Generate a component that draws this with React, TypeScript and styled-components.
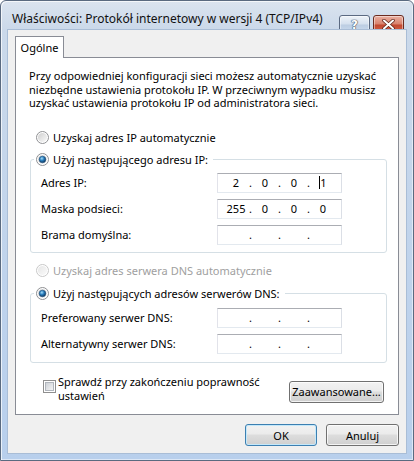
import React, { useId } from "react";
import styled, { createGlobalStyle } from "styled-components";

const GlobalStyle = createGlobalStyle`
  html, body { margin: 0; padding: 0; background: #fff; }
  body {
    font-family: "Noto Sans", "Segoe UI", sans-serif;
    font-size: 11px;
    color: #000;
  }
  * { box-sizing: border-box; }
`;

const Window = styled.div`
  width: 414px;
  height: 461px;
  display: flex;
  flex-direction: column;
  border: 1px solid #5a6a80;
  border-radius: 6px 6px 0 0;
  padding: 0 7px 7px;
  background: linear-gradient(#dbe4ef, #cbd9ea 28px, #bfd3ec 60%, #b8cfec);
  box-shadow: inset 1px 1px 0 rgba(255, 255, 255, 0.7), inset -1px -1px 0 rgba(255, 255, 255, 0.5);
`;

const TitleBar = styled.div`
  height: 29px;
  display: flex;
  align-items: center;
  padding: 6px 2px 0 4px;
`;

const Title = styled.div`
  font-size: 12px;
  color: #111;
  white-space: nowrap;
`;

const CaptionButtons = styled.div`
  margin-left: auto;
  display: flex;
  gap: 3px;
  align-self: flex-start;
  margin-top: 8px;
`;

const CaptionButton = styled.div<{ $close?: boolean }>`
  width: 31px;
  height: 19px;
  border-radius: 3px;
  display: flex;
  align-items: center;
  justify-content: center;
  border: 1px solid ${(p) => (p.$close ? "#6b2b20" : "#5b6a82")};
  background: ${(p) =>
    p.$close
      ? "linear-gradient(#eab0a2, #d8816d 48%, #c2472f 52%, #d2664c)"
      : "linear-gradient(#eef3f9, #d4e0ee 48%, #bccde2 52%, #cadcf0)"};
  box-shadow: inset 0 0 0 1px rgba(255, 255, 255, 0.45);
`;

const HelpGlyph = styled.span`
  font-family: "DejaVu Sans", sans-serif;
  font-weight: bold;
  font-size: 12px;
  color: #fff;
  line-height: 1;
  text-shadow: 0 0 1px #3d4a5e, 0 0 1px #3d4a5e, 0 0 1px #3d4a5e;
`;

const Client = styled.div`
  flex: 1;
  background: #f0f0f0;
  display: flex;
  flex-direction: column;
  padding: 6px 7px 0 7px;
  box-shadow: 0 0 0 1px #a9bdd6;
`;

const TabStrip = styled.div`
  display: flex;
`;

const Tab = styled.div`
  width: 49px;
  height: 22px;
  margin-bottom: -1px;
  border: 1px solid #898c95;
  border-bottom: none;
  background: #fff;
  display: flex;
  align-items: center;
  justify-content: center;
  position: relative;
  z-index: 1;
`;

const Panel = styled.div`
  height: 358px;
  border: 1px solid #898c95;
  background: #fff;
  display: flex;
  flex-direction: column;
`;

const Description = styled.p`
  margin: 11px 0 0 13px;
  line-height: 13.5px;
  white-space: nowrap;
`;

const RadioRow = styled.label<{ $top: number; $disabled?: boolean }>`
  display: flex;
  align-items: center;
  gap: 4px;
  height: 14px;
  margin: ${(p) => p.$top}px 0 0 20px;
  color: ${(p) => (p.$disabled ? "#a0a0a0" : "#000")};
`;

const Group = styled.fieldset<{ $top: number }>`
  margin: ${(p) => p.$top}px 11px 0 14px;
  padding: 0;
  min-width: 0;
  border: 1px solid #d5dfe5;
  border-radius: 3px;
`;

const Legend = styled.legend`
  margin-left: 3px;
  padding: 0 5px 0 2px;
  display: flex;
  align-items: center;
  gap: 4px;
  height: 14px;
`;

const Rows = styled.div<{ $pt: number; $pb: number }>`
  display: flex;
  flex-direction: column;
  gap: 6px;
  padding: ${(p) => p.$pt}px 44px ${(p) => p.$pb}px 10px;
`;

const Row = styled.div`
  display: flex;
  align-items: center;
  height: 20px;
`;

const Label = styled.span`
  flex: 1;
`;

const IpField = styled.div`
  width: 125px;
  height: 20px;
  display: flex;
  align-items: center;
  padding: 0 6px;
  border: 1px solid;
  border-color: #abadb3 #dbdfe6 #e3e9ef #e2e3ea;
  background: #fff;
`;

const Octet = styled.span`
  width: 24px;
  display: flex;
  justify-content: center;
  align-items: center;
`;

const Dot = styled.span`
  width: 5px;
  text-align: center;
`;

const Caret = styled.span`
  display: inline-block;
  width: 1px;
  height: 13px;
  background: #000;
`;

const Footer = styled.div`
  display: flex;
  align-items: flex-start;
  margin: 12px 14px 0 27px;
`;

const CheckLabel = styled.label`
  display: flex;
  align-items: flex-start;
  gap: 2px;
  line-height: 14px;
  flex: 1;
`;

const Button = styled.button<{ $w: number; $default?: boolean }>`
  width: ${(p) => p.$w}px;
  height: 22px;
  padding: 0;
  font: inherit;
  color: #000;
  border-radius: 3px;
  border: 1px solid ${(p) => (p.$default ? "#3c7fb1" : "#707070")};
  background: linear-gradient(#f2f2f2, #ebebeb 45%, #dddddd 50%, #cfcfcf);
  box-shadow: inset 0 0 0 1px ${(p) => (p.$default ? "#c4e8fa" : "rgba(255,255,255,0.75)")};
`;

const AdvancedButton = styled(Button)`
  margin-top: 6px;
`;

const DialogButtons = styled.div`
  display: flex;
  justify-content: flex-end;
  gap: 9px;
  margin-top: 9px;
`;

function Radio({ checked, disabled }: { checked?: boolean; disabled?: boolean }) {
  const id = useId().replace(/:/g, "");
  return (
    <svg width="13" height="13" viewBox="0 0 13 13">
      <defs>
        <linearGradient id={`f${id}`} x1="0" y1="0" x2="1" y2="1">
          <stop offset="0" stopColor={disabled ? "#e6e6e6" : "#cfcfcf"} />
          <stop offset="1" stopColor="#fafafa" />
        </linearGradient>
        <radialGradient id={`d${id}`} cx="0.4" cy="0.35" r="0.7">
          <stop offset="0" stopColor="#a6ddf8" />
          <stop offset="0.45" stopColor="#2a7fbf" />
          <stop offset="1" stopColor="#0b2b4d" />
        </radialGradient>
      </defs>
      <circle cx="6.5" cy="6.5" r="6" fill="#fff" stroke={disabled ? "#c8c8c8" : "#8f9093"} />
      <circle cx="6.5" cy="6.5" r="4.6" fill={`url(#f${id})`} />
      {checked && <circle cx="6.5" cy="6.5" r="3.3" fill={`url(#d${id})`} stroke="#1d4f7c" strokeWidth="0.6" />}
    </svg>
  );
}

function Checkbox() {
  const id = useId().replace(/:/g, "");
  return (
    <svg width="13" height="13" viewBox="0 0 13 13" style={{ flex: "none", marginTop: 5 }}>
      <defs>
        <linearGradient id={`c${id}`} x1="0" y1="0" x2="1" y2="1">
          <stop offset="0" stopColor="#cbcfd5" />
          <stop offset="1" stopColor="#f6f6f6" />
        </linearGradient>
      </defs>
      <rect x="0.5" y="0.5" width="12" height="12" fill="#fff" stroke="#8f8f8f" />
      <rect x="2.5" y="2.5" width="8" height="8" fill={`url(#c${id})`} stroke="#b0b5bc" />
    </svg>
  );
}

function CloseGlyph() {
  return (
    <svg width="13" height="11" viewBox="0 0 13 11">
      <path d="M2 1.5 L11 9.5 M11 1.5 L2 9.5" stroke="#5a1e14" strokeWidth="3.4" strokeLinecap="round" />
      <path d="M2 1.5 L11 9.5 M11 1.5 L2 9.5" stroke="#fff" strokeWidth="2" strokeLinecap="round" />
    </svg>
  );
}

function IpAddress({ value, caretLast }: { value?: string[]; caretLast?: boolean }) {
  const parts = value ?? ["", "", "", ""];
  return (
    <IpField>
      {parts.map((part, i) => (
        <React.Fragment key={i}>
          {i > 0 && <Dot>.</Dot>}
          <Octet>
            {caretLast && i === 3 && <Caret />}
            {part}
          </Octet>
        </React.Fragment>
      ))}
    </IpField>
  );
}

export default function App() {
  return (
    <>
      <GlobalStyle />
      <Window>
        <TitleBar>
          <Title>Właściwości: Protokół internetowy w wersji 4 (TCP/IPv4)</Title>
          <CaptionButtons>
            <CaptionButton>
              <HelpGlyph>?</HelpGlyph>
            </CaptionButton>
            <CaptionButton $close>
              <CloseGlyph />
            </CaptionButton>
          </CaptionButtons>
        </TitleBar>
        <Client>
          <TabStrip>
            <Tab>Ogólne</Tab>
          </TabStrip>
          <Panel>
            <Description>
              Przy odpowiedniej konfiguracji sieci możesz automatycznie uzyskać
              <br />
              niezbędne ustawienia protokołu IP. W przeciwnym wypadku musisz
              <br />
              uzyskać ustawienia protokołu IP od administratora sieci.
            </Description>
            <RadioRow $top={21}>
              <Radio />
              Uzyskaj adres IP automatycznie
            </RadioRow>
            <Group $top={8}>
              <Legend>
                <Radio checked />
                Użyj następującego adresu IP:
              </Legend>
              <Rows $pt={6} $pb={7}>
                <Row>
                  <Label>Adres IP:</Label>
                  <IpAddress value={["2", "0", "0", "1"]} caretLast />
                </Row>
                <Row>
                  <Label>Maska podsieci:</Label>
                  <IpAddress value={["255", "0", "0", "0"]} />
                </Row>
                <Row>
                  <Label>Brama domyślna:</Label>
                  <IpAddress />
                </Row>
              </Rows>
            </Group>
            <RadioRow $top={11} $disabled>
              <Radio disabled />
              Uzyskaj adres serwera DNS automatycznie
            </RadioRow>
            <Group $top={9}>
              <Legend>
                <Radio checked />
                Użyj następujących adresów serwerów DNS:
              </Legend>
              <Rows $pt={7} $pb={8}>
                <Row>
                  <Label>Preferowany serwer DNS:</Label>
                  <IpAddress />
                </Row>
                <Row>
                  <Label>Alternatywny serwer DNS:</Label>
                  <IpAddress />
                </Row>
              </Rows>
            </Group>
            <Footer>
              <CheckLabel>
                <Checkbox />
                <span>
                  Sprawdź przy zakończeniu poprawność
                  <br />
                  ustawień
                </span>
              </CheckLabel>
              <AdvancedButton $w={95}>Zaawansowane...</AdvancedButton>
            </Footer>
          </Panel>
          <DialogButtons>
            <Button $w={72} $default>
              OK
            </Button>
            <Button $w={73}>Anuluj</Button>
          </DialogButtons>
        </Client>
      </Window>
    </>
  );
}
